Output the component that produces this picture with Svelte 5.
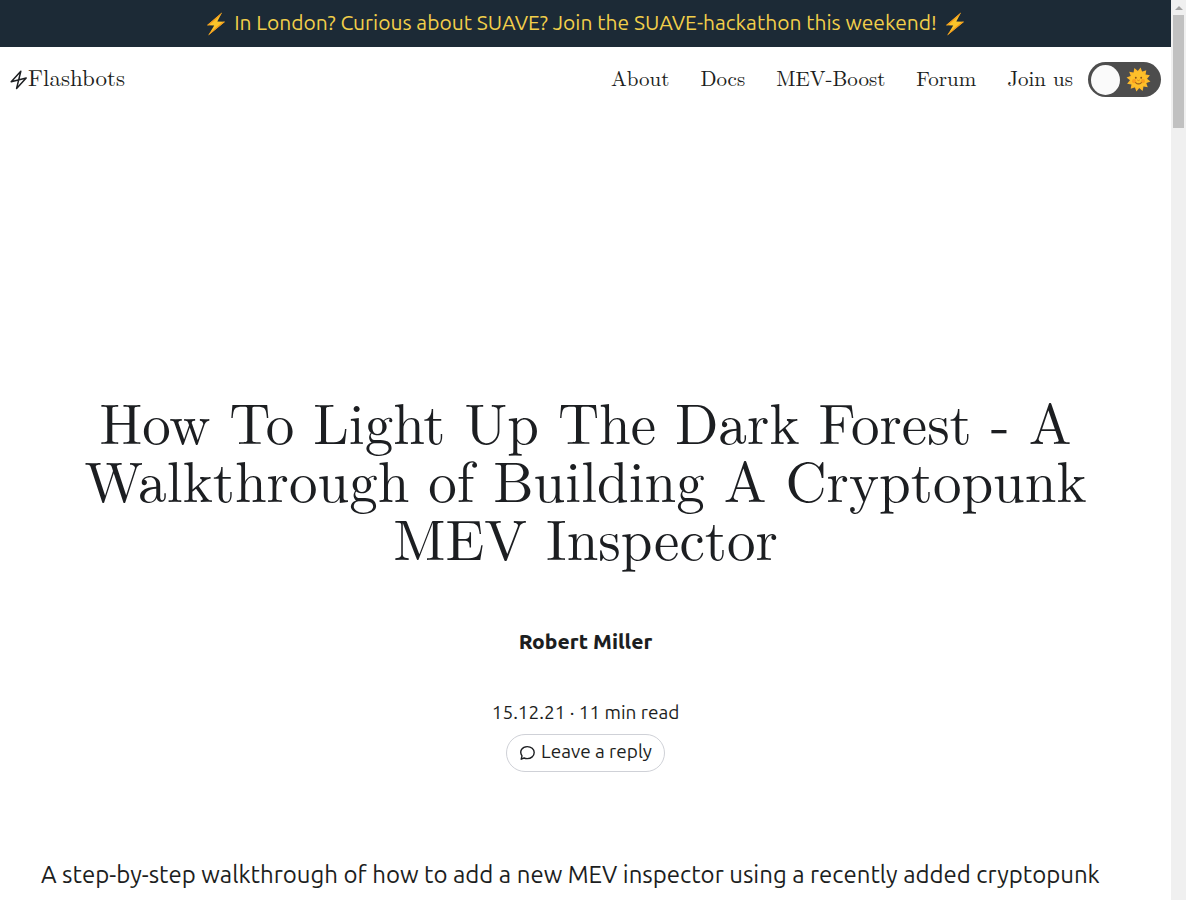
<script>
  const links = ['About', 'Docs', 'MEV-Boost', 'Forum', 'Join us'];
  const titleLines = [
    'How To Light Up The Dark Forest - A',
    'Walkthrough of Building A Cryptopunk',
    'MEV Inspector'
  ];
  let light = $state(false);
  const rays = Array.from({ length: 12 }, (_, i) => i * 30);
</script>

{#snippet bolt()}
  <svg class="bolt" viewBox="0 0 20 24" aria-hidden="true">
    <path d="M16 .5 1 13.2l7.2.2L2.2 23.5 19 9.8l-7.700-.2z" fill="#fcc52a" />
    <path d="M16 .5 1 13.2l2 .1L14.800 3zM2.2 23.5 19 9.8l-2-.1-13.200 11z" fill="#f39a1d" />
  </svg>
{/snippet}

<div class="window">
  <div class="page">
    <a class="banner" href="#hackathon">
      {@render bolt()}
      <span>In London? Curious about SUAVE? Join the SUAVE-hackathon this weekend!</span>
      {@render bolt()}
    </a>

    <header>
      <a class="brand" href="#home">
        <svg class="logo" viewBox="0 0 18 20" aria-hidden="true">
          <path d="M10.800 1.200 1.200 11.800 16.200 8 6.600 18.400z" fill="none" stroke="#1c1e21" stroke-width="1.5" stroke-linejoin="round" />
        </svg>
        <span>Flashbots</span>
      </a>
      <nav>
        {#each links as link}
          <a href="#{link}">{link}</a>
        {/each}
      </nav>
      <label class="toggle">
        <input type="checkbox" aria-label="Switch colour theme" bind:checked={light} />
        <span class="knob"></span>
        <svg class="sun" viewBox="-13 -13 26 26" aria-hidden="true">
          {#each rays as angle}
            <path d="M-3-7.5 0-12.6 3-7.5z" fill="#fdb92a" transform="rotate({angle + 10})" />
          {/each}
          <circle r="8.600" fill="#fdc02a" />
          <circle cx="-4.600" cy="1.8" r="2.2" fill="#fa9f1e" />
          <circle cx="4.600" cy="1.8" r="2.2" fill="#fa9f1e" />
          <circle cx="-2.800" cy="-1.8" r="1" fill="#8b531c" />
          <circle cx="2.800" cy="-1.8" r="1" fill="#8b531c" />
          <path d="M-3 3.200Q0 6 3 3.200" fill="none" stroke="#9b5a1c" stroke-width="1.1" stroke-linecap="round" />
          <path d="M-1 .8Q0 1.800 1 .8" fill="none" stroke="#d9831c" stroke-width="1" stroke-linecap="round" />
        </svg>
      </label>
    </header>

    <main>
      <h1>
        {#each titleLines as line}
          <span>{line}</span>
        {/each}
      </h1>
      <p class="author">Robert Miller</p>
      <p class="meta">15.12.21 · 11 min read</p>
      <a class="reply" href="#reply">
        <svg viewBox="0 0 16 16" aria-hidden="true">
          <path d="M2.2 14.2 3 10.9C-.2 6.2 3.4 1.6 8.2 1.6c4 0 7 2.6 7 6s-3 6-7 6c-1.200 0-2.200-.2-3.100-.6z" fill="none" stroke="#1c1e21" stroke-width="1.4" stroke-linejoin="round" />
        </svg>
        <span>Leave a reply</span>
      </a>
      <p class="intro">A step-by-step walkthrough of how to add a new MEV inspector using a recently added cryptopunk</p>
    </main>
  </div>

  <div class="track" aria-hidden="true">
    <span class="arrow"></span>
    <span class="thumb"></span>
  </div>
</div>

<style>
  :global(body) {
    margin: 0;
    background: #fff;
  }

  .window {
    display: flex;
    height: 100vh;
    overflow: hidden;
    color: #1c1e21;
    font-family: Ubuntu, 'Noto Sans', sans-serif;
    font-weight: 400;
  }

  .page {
    flex: 1;
    min-width: 0;
  }

  a {
    color: inherit;
    text-decoration: none;
    white-space: nowrap;
  }

  .banner,
  .meta,
  .reply,
  .intro {
    font-variation-settings: 'wght' 450;
  }

  .banner {
    display: flex;
    align-items: center;
    justify-content: center;
    gap: 8px;
    height: 47px;
    background: #1c2a36;
    color: #f2cf4a;
    font-size: 21px;
    line-height: 44px;
  }

  .banner span {
    height: 47px;
  }

  .bolt {
    width: 20px;
    height: 24px;
  }

  header {
    display: flex;
    align-items: center;
    height: 65px;
    padding: 0 10px;
    font-family: 'Latin Modern Roman', 'Liberation Serif', serif;
  }

  .brand {
    display: flex;
    align-items: center;
    font-size: 23px;
  }

  .brand span,
  nav a {
    padding-bottom: 6px;
  }

  .logo {
    width: 18px;
    height: 20px;
  }

  nav {
    display: flex;
    gap: 31px;
    margin: 0 15px 0 auto;
    font-size: 21px;
  }

  .toggle {
    position: relative;
    display: flex;
    align-items: center;
    justify-content: space-between;
    box-sizing: border-box;
    width: 73px;
    height: 35px;
    padding: 0 10px 0 3px;
    border-radius: 18px;
    background: #4d4d4d;
  }

  .toggle input {
    position: absolute;
    inset: 0;
    margin: 0;
    opacity: 0;
  }

  .knob {
    width: 29px;
    height: 30px;
    border-radius: 50%;
    background: #fafafa;
  }

  .sun {
    width: 25px;
    height: 25px;
  }

  main {
    display: flex;
    flex-direction: column;
    align-items: center;
    padding: 280px 41px 0;
  }

  h1 {
    margin: 0;
    font: 400 57px/58px 'Latin Modern Roman', 'Liberation Serif', serif;
    text-align: center;
  }

  h1 span {
    display: block;
    white-space: nowrap;
  }

  p {
    margin: 0;
  }

  .author {
    margin-top: 59px;
    font-size: 21px;
    font-weight: 800;
    line-height: 32px;
  }

  .meta {
    margin-top: 40px;
    font-size: 19px;
    line-height: 30px;
  }

  .reply {
    display: flex;
    align-items: center;
    gap: 6px;
    margin-top: 7px;
    padding: 0 12px;
    border: 1px solid #cfd1d7;
    border-radius: 19px;
    font-size: 19px;
    line-height: 32px;
  }

  .reply span {
    padding-bottom: 4px;
  }

  .reply svg {
    width: 16px;
    height: 16px;
  }

  .intro {
    align-self: flex-start;
    margin-top: 84px;
    font-size: 24px;
    line-height: 38px;
    white-space: nowrap;
  }

  .track {
    display: flex;
    flex-direction: column;
    align-items: center;
    width: 15px;
    background: #f0f0f0;
  }

  .arrow {
    margin: 6px 0 5px;
    border: 4px solid transparent;
    border-top: 0;
    border-bottom-color: #a3a3a3;
  }

  .thumb {
    width: 11px;
    height: 113px;
    background: #c1c1c1;
  }
</style>
